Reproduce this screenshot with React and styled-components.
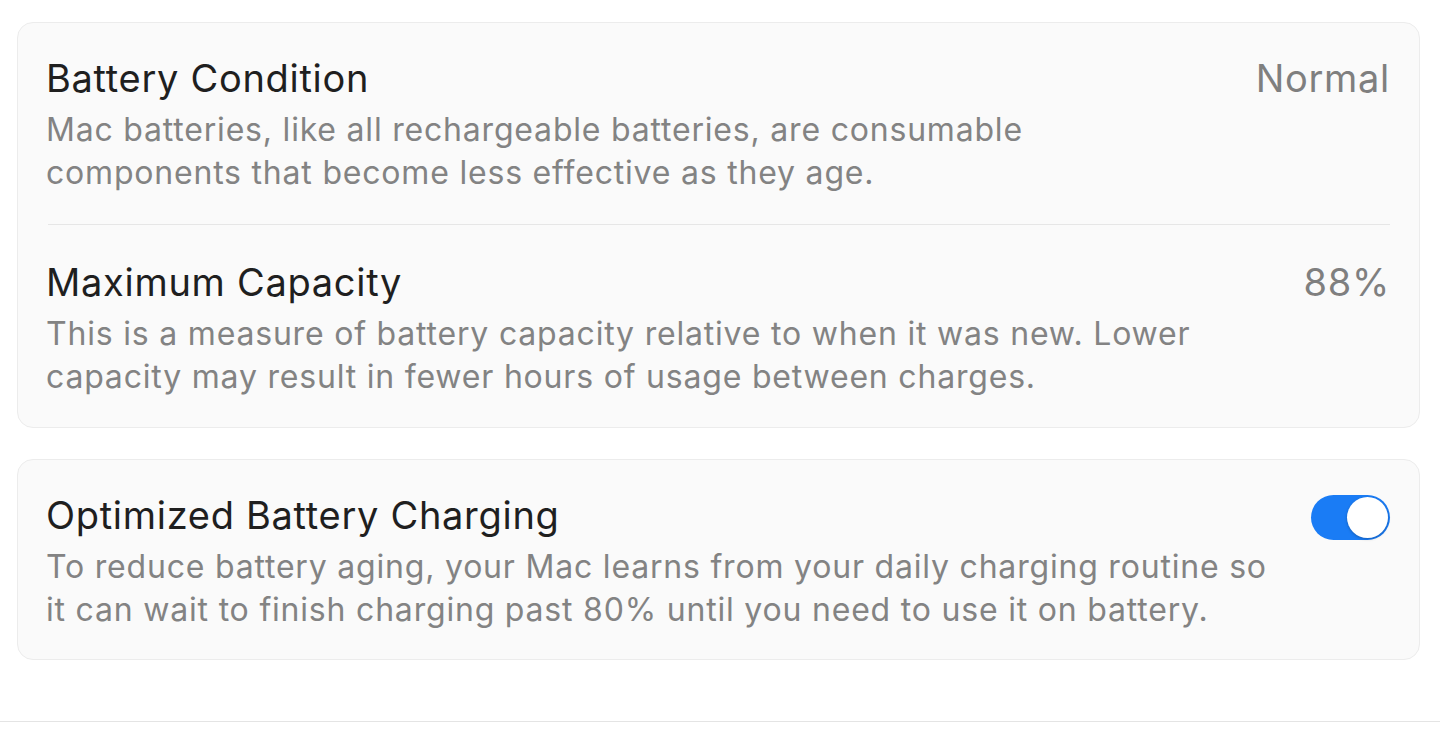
import React from "react";
import styled, { createGlobalStyle } from "styled-components";

const GlobalStyle = createGlobalStyle`
  html, body {
    margin: 0;
    padding: 0;
    background: #ffffff;
  }
  body {
    font-family: Inter, "Noto Sans", "Liberation Sans", sans-serif;
    -webkit-font-smoothing: antialiased;
  }
`;

const Page = styled.div`
  height: 733px;
  display: flex;
  flex-direction: column;
  box-sizing: border-box;
  padding-top: 22px;
`;

const Cards = styled.div`
  display: flex;
  flex-direction: column;
  gap: 31px;
  padding: 0 20px 0 17px;
`;

const Card = styled.section`
  background: #fafafa;
  border: 1.5px solid #ececec;
  border-radius: 16px;
  padding: 0 29px 0 28px;
`;

const Row = styled.div`
  display: flex;
  justify-content: space-between;
  align-items: flex-start;
  gap: 20px;
  padding: ${(p) => p.$pad || "32px 0 30px"};
  border-top: ${(p) => (p.$divider ? "1.5px solid #e6e6e6" : "none")};
  margin-left: ${(p) => (p.$divider ? "2px" : "0")};
`;

const Text = styled.div`
  display: flex;
  flex-direction: column;
  gap: 7px;
  min-width: 0;
  margin-left: ${(p) => (p.$shift ? "-2px" : "0")};
`;

const Title = styled.div`
  font-size: 38px;
  line-height: 46px;
  color: #1f1f1f;
  letter-spacing: 0.7px;
`;

const Desc = styled.div`
  font-size: 32px;
  line-height: 43px;
  color: #838383;
  letter-spacing: 0.8px;
  white-space: nowrap;
`;

const Value = styled.div`
  font-size: 38px;
  line-height: 46px;
  color: #7f7f7f;
  letter-spacing: 0.7px;
  white-space: nowrap;
`;

const Toggle = styled.div`
  flex: none;
  width: 79px;
  height: 45px;
  margin-top: 3px;
  border-radius: 23px;
  background: ${(p) => (p.$on ? "#1a7cf5" : "#e0e0e0")};
  display: flex;
  align-items: center;
  justify-content: ${(p) => (p.$on ? "flex-end" : "flex-start")};
  padding: 2px;
  box-sizing: border-box;
`;

const Knob = styled.div`
  width: 41px;
  height: 41px;
  border-radius: 50%;
  background: #ffffff;
  box-shadow: 0 1px 3px rgba(0, 0, 0, 0.25);
`;

const Footer = styled.div`
  margin-top: auto;
  margin-bottom: 11px;
  border-top: 1.5px solid #e4e4e4;
`;

export default function App() {
  return (
    <>
      <GlobalStyle />
      <Page>
        <Cards>
          <Card>
            <Row>
              <Text>
                <Title>Battery Condition</Title>
                <Desc>
                  Mac batteries, like all rechargeable batteries, are consumable
                  <br />
                  components that become less effective as they age.
                </Desc>
              </Text>
              <Value>Normal</Value>
            </Row>
            <Row $divider $pad="34px 0 29px">
              <Text $shift>
                <Title>Maximum Capacity</Title>
                <Desc>
                  This is a measure of battery capacity relative to when it was
                  new. Lower
                  <br />
                  capacity may result in fewer hours of usage between charges.
                </Desc>
              </Text>
              <Value>88%</Value>
            </Row>
          </Card>
          <Card>
            <Row $pad="32px 0 28px">
              <Text>
                <Title>Optimized Battery Charging</Title>
                <Desc>
                  To reduce battery aging, your Mac learns from your daily
                  charging routine so
                  <br />
                  it can wait to finish charging past 80% until you need to use
                  it on battery.
                </Desc>
              </Text>
              <Toggle $on>
                <Knob />
              </Toggle>
            </Row>
          </Card>
        </Cards>
        <Footer />
      </Page>
    </>
  );
}
